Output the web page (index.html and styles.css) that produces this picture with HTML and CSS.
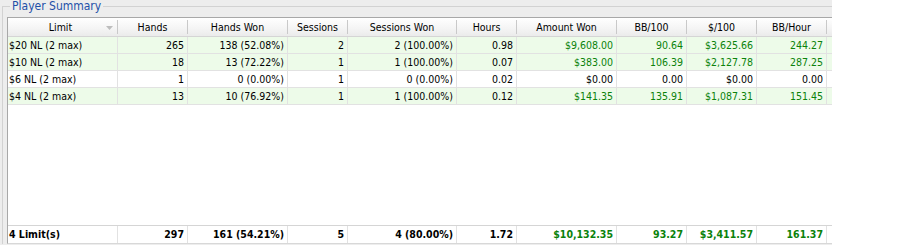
FILE: index.html
```html
<!DOCTYPE html>
<html>
<head>
<meta charset="utf-8">
<link rel="stylesheet" href="styles.css">
</head>
<body>
<div class="panel">
  <fieldset class="group">
    <legend class="caption">Player Summary</legend>
    <div class="grid">
      <div class="row head">
        <div class="c l"><span class="lt">Limit</span><svg class="sort" width="7" height="4" viewBox="0 0 7 4"><path d="M0 0h7L3.5 4z" fill="#bdbdbd"/></svg></div>
        <div class="c">Hands</div>
        <div class="c">Hands Won</div>
        <div class="c">Sessions</div>
        <div class="c">Sessions Won</div>
        <div class="c">Hours</div>
        <div class="c">Amount Won</div>
        <div class="c">BB/100</div>
        <div class="c">$/100</div>
        <div class="c">BB/Hour</div>
      </div>
      <div class="body">
        <div class="row data win">
          <div class="c l">$20 NL (2 max)</div><div class="c">265</div><div class="c">138 (52.08%)</div><div class="c">2</div><div class="c">2 (100.00%)</div><div class="c">0.98</div><div class="c g">$9,608.00</div><div class="c g">90.64</div><div class="c g">$3,625.66</div><div class="c g">244.27</div>
        </div>
        <div class="row data win">
          <div class="c l">$10 NL (2 max)</div><div class="c">18</div><div class="c">13 (72.22%)</div><div class="c">1</div><div class="c">1 (100.00%)</div><div class="c">0.07</div><div class="c g">$383.00</div><div class="c g">106.39</div><div class="c g">$2,127.78</div><div class="c g">287.25</div>
        </div>
        <div class="row data">
          <div class="c l">$6 NL (2 max)</div><div class="c">1</div><div class="c">0 (0.00%)</div><div class="c">1</div><div class="c">0 (0.00%)</div><div class="c">0.02</div><div class="c">$0.00</div><div class="c">0.00</div><div class="c">$0.00</div><div class="c">0.00</div>
        </div>
        <div class="row data win">
          <div class="c l">$4 NL (2 max)</div><div class="c">13</div><div class="c">10 (76.92%)</div><div class="c">1</div><div class="c">1 (100.00%)</div><div class="c">0.12</div><div class="c g">$141.35</div><div class="c g">135.91</div><div class="c g">$1,087.31</div><div class="c g">151.45</div>
        </div>
      </div>
      <div class="row foot">
        <div class="c l">4 Limit(s)</div><div class="c">297</div><div class="c">161 (54.21%)</div><div class="c">5</div><div class="c">4 (80.00%)</div><div class="c">1.72</div><div class="c g">$10,132.35</div><div class="c g">93.27</div><div class="c g">$3,411.57</div><div class="c g">161.37</div>
      </div>
    </div>
  </fieldset>
</div>
</body>
</html>
```

FILE: styles.css
```css
html, body {
  margin: 0;
  padding: 0;
  background: #ffffff;
}
body {
  font-family: "DejaVu Sans Condensed", "DejaVu Sans", sans-serif;
  font-stretch: condensed;
  font-size: 10.5px;
  color: #000;
}
.panel {
  width: 832px;
  height: 245px;
  background: #ededed;
  overflow: hidden;
}
.group {
  margin: 0 0 0 2px;
  padding: 4px 0 0 4px;
  border: 0;
  border-top: 1px solid #d2d2d2;
  border-left: 1px solid #d2d2d2;
  min-width: 0;
}
.caption {
  margin-left: 3px;
  padding: 0 2px;
  line-height: 13px;
  height: 13px;
  color: #1e50a8;
  font-size: 12px;
}
.grid {
  width: 824px;
  height: 225px;
  border-top: 1px solid #a8a8a8;
  border-left: 1px solid #a8a8a8;
  border-bottom: 1px solid #d8d8d8;
  background: #fff;
  display: flex;
  flex-direction: column;
}
.row {
  display: grid;
  grid-template-columns: 110px 70px 100px 60px 109px 60px 100px 70px 70px 70px;
}
.c {
  padding: 0 3px 0 2px;
  text-align: right;
  white-space: nowrap;
  overflow: hidden;
}
.c.l {
  text-align: left;
  padding-left: 1px;
}
.head {
  height: 18px;
  border-bottom: 1px solid #d5d5d5;
  background: linear-gradient(#ffffff, #f4f4f4 60%, #ebebeb);
}
.head .c {
  text-align: center;
  line-height: 18px;
  background: linear-gradient(#c9c9c9, #c9c9c9) right center / 1px 14px no-repeat;
}
.head .c.l {
  display: grid;
  grid-template-columns: 1fr auto 1fr;
  align-items: center;
  padding: 0 5px 0 0;
}
.lt {
  grid-column: 2;
}
.sort {
  grid-column: 3;
  justify-self: end;
  margin-top: 2px;
}
.body {
  flex: 1;
}
.data {
  height: 16px;
  border-bottom: 1px solid #e2e2e2;
  line-height: 16px;
}
.data .c, .foot .c {
  border-right: 1px solid #e2e2e2;
}
.data.win {
  background: #edfbe9;
}
.g {
  color: #0b820b;
}
.foot {
  height: 17px;
  line-height: 17px;
  border-top: 1px solid #d5d5d5;
  font-weight: bold;
}
```
